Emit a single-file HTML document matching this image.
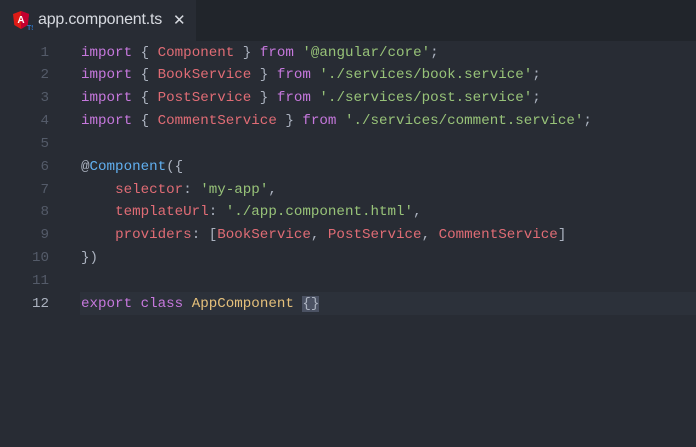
<!DOCTYPE html>
<html><head><meta charset="utf-8"><style>
body{margin:0;width:696px;height:447px;background:#282c34;overflow:hidden;position:relative;font-family:"Liberation Mono",monospace;}
.bar{position:absolute;left:0;top:0;width:696px;height:41px;background:#21252b;}
.tab{position:absolute;left:0;top:0;width:196px;height:41px;background:#282c34;}
.tab .t{position:absolute;left:38px;top:11px;font:16px "Liberation Sans",sans-serif;color:#d7dae0;letter-spacing:-0.2px;}
.tab .x{position:absolute;left:173px;top:11px;font:bold 15px "DejaVu Sans",sans-serif;color:#d7dae0;}
.hl{position:absolute;left:80px;top:292px;width:616px;height:23px;background:#2c313a;}
.code{position:absolute;left:0;top:41.5px;font-size:14.2px;line-height:22.85px;white-space:pre;}
.ln{position:absolute;left:0;width:49px;text-align:right;color:#545b69;}
.l{position:absolute;left:81px;color:#abb2bf;}
.k{color:#c678dd}.r{color:#e06c75}.s{color:#98c379}.b{color:#61afef}.y{color:#e5c07b}
.br{background:#4b5263;}
</style></head><body>
<div class="bar"></div>
<div class="tab">
<svg style="position:absolute;left:13px;top:11px" width="20" height="20" viewBox="0 0 20 20"><path d="M8 0L0 3l1.3 11L8 18l6.7-4L16 3z" fill="#dd1b16"/><path d="M8 0v18l6.7-4L16 3z" fill="#c3002f"/><text x="8" y="12" font-family="Liberation Sans" font-size="10" font-weight="bold" fill="#fff" text-anchor="middle">A</text><text x="14" y="19" font-family="Liberation Sans" font-size="7" font-weight="bold" fill="#2f74c0">TS</text></svg>
<span class="t">app.component.ts</span><span class="x">✕</span>
</div>
<div class="hl"></div>
<div class="code">
<div class="ln" style="top:0">1</div><div class="l" style="top:0"><span class="k">import</span> { <span class="r">Component</span> } <span class="k">from</span> <span class="s">'@angular/core'</span>;</div>
<div class="ln" style="top:22.85px">2</div><div class="l" style="top:22.85px"><span class="k">import</span> { <span class="r">BookService</span> } <span class="k">from</span> <span class="s">'./services/book.service'</span>;</div>
<div class="ln" style="top:45.7px">3</div><div class="l" style="top:45.7px"><span class="k">import</span> { <span class="r">PostService</span> } <span class="k">from</span> <span class="s">'./services/post.service'</span>;</div>
<div class="ln" style="top:68.55px">4</div><div class="l" style="top:68.55px"><span class="k">import</span> { <span class="r">CommentService</span> } <span class="k">from</span> <span class="s">'./services/comment.service'</span>;</div>
<div class="ln" style="top:91.4px">5</div>
<div class="ln" style="top:114.25px">6</div><div class="l" style="top:114.25px">@<span class="b">Component</span>({</div>
<div class="ln" style="top:137.1px">7</div><div class="l" style="top:137.1px">    <span class="r">selector</span>: <span class="s">'my-app'</span>,</div>
<div class="ln" style="top:159.95px">8</div><div class="l" style="top:159.95px">    <span class="r">templateUrl</span>: <span class="s">'./app.component.html'</span>,</div>
<div class="ln" style="top:182.8px">9</div><div class="l" style="top:182.8px">    <span class="r">providers</span>: [<span class="r">BookService</span>, <span class="r">PostService</span>, <span class="r">CommentService</span>]</div>
<div class="ln" style="top:205.65px">10</div><div class="l" style="top:205.65px">})</div>
<div class="ln" style="top:228.5px">11</div>
<div class="ln" style="top:251.35px;color:#abb2bf">12</div><div class="l" style="top:251.35px"><span class="k">export</span> <span class="k">class</span> <span class="y">AppComponent</span> <span class="br">{}</span></div>
</div>
</body></html>
